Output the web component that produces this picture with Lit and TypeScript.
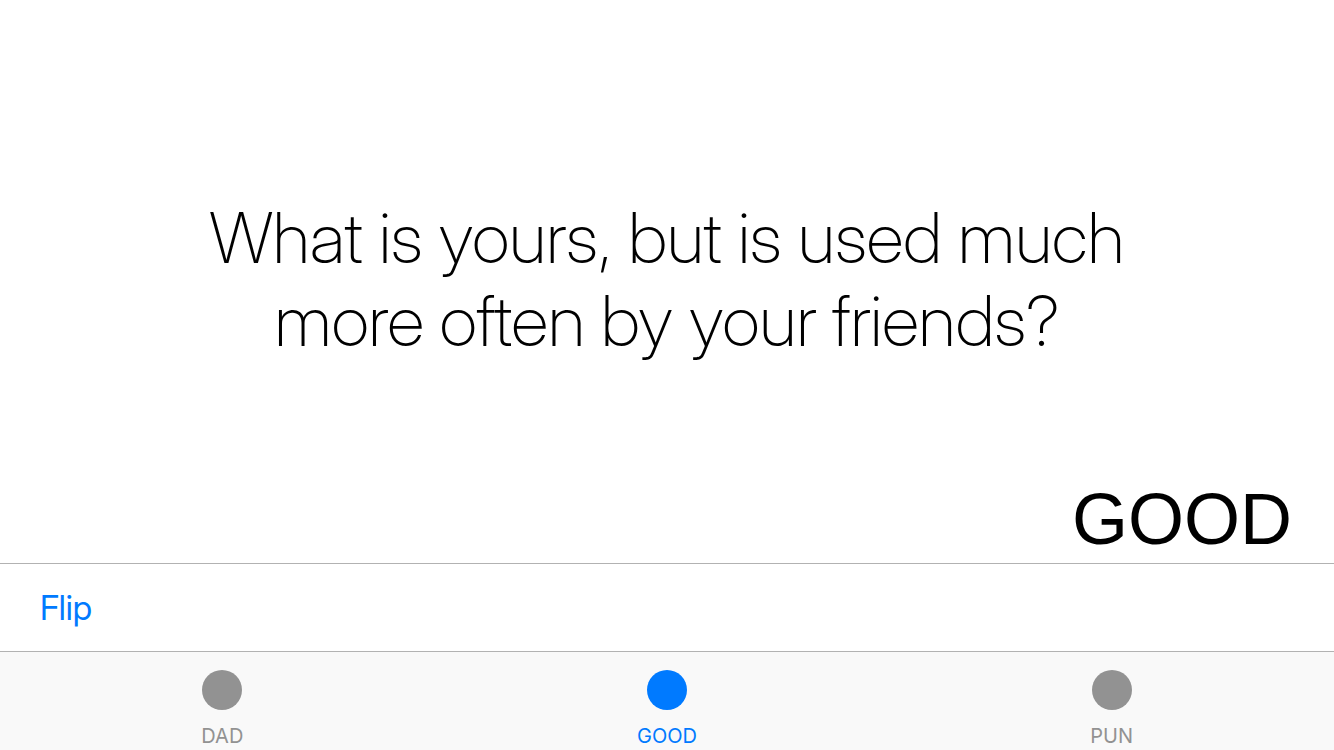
import { LitElement, html, css } from "lit";
import { customElement, state } from "lit/decorators.js";

@customElement("app-root")
export class AppRoot extends LitElement {
  static styles = css`
    :host {
      display: flex;
      flex-direction: column;
      min-height: 100vh;
      background: #fff;
      color: #000;
      font-family: Inter, "Liberation Sans", sans-serif;
    }
    * { box-sizing: border-box; }
    button {
      border: 0;
      padding: 0;
      background: none;
      font: inherit;
      cursor: pointer;
    }
    main {
      flex: 1;
      display: grid;
      grid-template-rows: 1fr auto;
    }
    h1 {
      margin: 0;
      padding: 80px 120px 0;
      align-self: center;
      font-family: "Inter Display", Inter, sans-serif;
      font-size: 70px;
      font-weight: 200;
      line-height: 83px;
      text-align: center;
      text-wrap: balance;
    }
    .category {
      margin: 0;
      padding: 0 42px 2px;
      font-family: "Liberation Sans", sans-serif;
      font-size: 72px;
      line-height: 84px;
      text-align: right;
    }
    .toolbar {
      display: flex;
      align-items: center;
      height: 88px;
      padding: 0 40px;
      border-top: 1px solid #b2b2b2;
    }
    .flip {
      color: #007aff;
      font-family: "Inter Display", Inter, sans-serif;
      font-size: 34px;
      line-height: 44px;
    }
    .tabs {
      display: grid;
      grid-template-columns: repeat(3, 1fr);
      height: 99px;
      border-top: 1px solid #b2b2b2;
      background: #f9f9f9;
    }
    .tab {
      display: flex;
      flex-direction: column;
      align-items: center;
      gap: 14px;
      padding-top: 18px;
      color: #929292;
      font-size: 20px;
      line-height: 24px;
    }
    .tab.selected { color: #007aff; }
    .dot {
      width: 40px;
      height: 40px;
      border-radius: 50%;
      background: currentColor;
    }
  `;

  @state() private selected = "GOOD";

  render() {
    return html`
      <main>
        <h1>What is yours, but is used much more often by your friends?</h1>
        <p class="category">${this.selected}</p>
      </main>
      <div class="toolbar"><button class="flip">Flip</button></div>
      <nav class="tabs">
        ${["DAD", "GOOD", "PUN"].map(
          (name) => html`<button
            class="tab ${name === this.selected ? "selected" : ""}"
            @click=${() => (this.selected = name)}
          ><span class="dot"></span><span>${name}</span></button>`
        )}
      </nav>
    `;
  }
}
